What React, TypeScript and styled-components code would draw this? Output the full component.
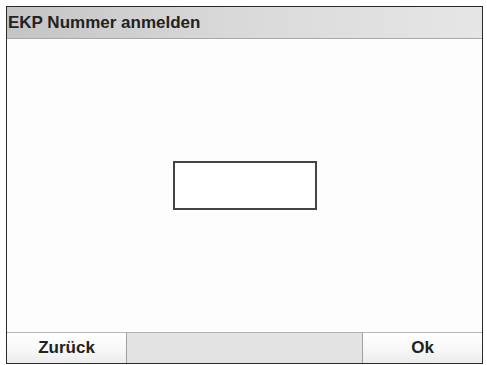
import React from "react";
import styled, { createGlobalStyle } from "styled-components";

const Global = createGlobalStyle`
  html, body { margin: 0; padding: 0; background: #ffffff; }
  body { font-family: "Liberation Sans", Arial, sans-serif; }
`;

const Page = styled.div`
  width: 487px;
  height: 365px;
  padding: 6px 4px 1px 6px;
  box-sizing: border-box;
  background: #ffffff;
`;

const Window = styled.div`
  width: 100%;
  height: 100%;
  box-sizing: border-box;
  border: 1.5px solid #2a2a2a;
  display: flex;
  flex-direction: column;
  background: #ffffff;
`;

const TitleBar = styled.div`
  height: 32px;
  box-sizing: border-box;
  border-bottom: 1px solid #a8a8a8;
  background: linear-gradient(to right, #c4c4c4 0%, #d8d8d8 45%, #e6e6e6 100%);
  display: flex;
  align-items: center;
  padding-left: 1px;
  font-size: 17px;
  font-weight: bold;
  color: #222222;
`;

const Body = styled.div`
  flex: 1;
  display: flex;
  align-items: center;
  justify-content: center;
  background: #fdfdfd;
`;

const InputBox = styled.div`
  width: 144px;
  height: 49px;
  box-sizing: border-box;
  border: 2px solid #454545;
  background: #ffffff;
`;

const Footer = styled.div`
  height: 31px;
  box-sizing: border-box;
  border-top: 1px solid #b4b4b4;
  background: #e3e3e3;
  display: flex;
  justify-content: space-between;
`;

const Button = styled.div<{ $side: "left" | "right" }>`
  width: 120px;
  box-sizing: border-box;
  display: flex;
  align-items: center;
  justify-content: center;
  background: linear-gradient(to bottom, #ffffff 0%, #f6f6f6 60%, #ececec 100%);
  border-${(p) => (p.$side === "left" ? "right" : "left")}: 1px solid #a0a0a0;
  font-size: 17px;
  font-weight: bold;
  color: #222222;
`;

export default function App() {
  return (
    <>
      <Global />
      <Page>
        <Window>
          <TitleBar>EKP Nummer anmelden</TitleBar>
          <Body>
            <InputBox />
          </Body>
          <Footer>
            <Button $side="left">Zurück</Button>
            <Button $side="right">Ok</Button>
          </Footer>
        </Window>
      </Page>
    </>
  );
}
